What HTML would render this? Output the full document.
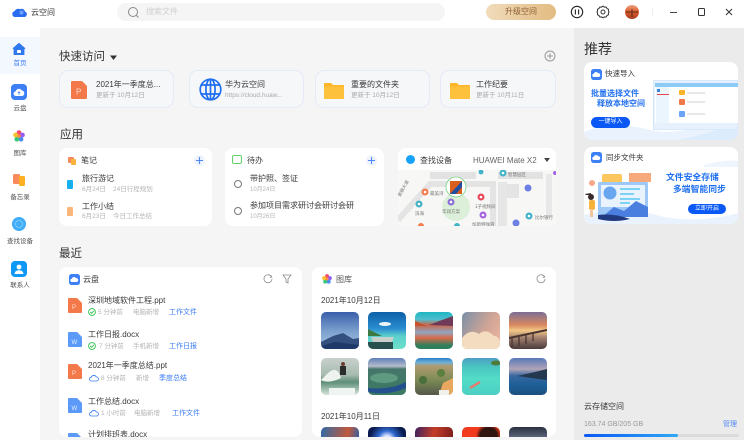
<!DOCTYPE html>
<html lang="zh"><head><meta charset="utf-8"><title>云空间</title>
<style>
*{box-sizing:border-box;margin:0;padding:0}
html,body{width:744px;height:440px;overflow:hidden;background:#f5f5f5}
body{position:relative;font-family:"Liberation Sans","Noto Sans CJK SC",sans-serif;color:#333;filter:blur(.3px)}
.a{position:absolute}
.t{position:absolute;white-space:nowrap;line-height:1;font-size:8px;color:#3a3a3a;transform:translateY(1px)}
.s{font-size:6.5px;color:#b4b4b4}
.h{font-size:11.5px;color:#333;transform:translateY(2px)}
.b{color:#3b7cf5;font-size:7px}
.c{position:absolute;background:#fff;border-radius:8px}
.q{position:absolute;top:70px;height:38px;width:115px;border-radius:9px;background:#f6f7f9;border:1px solid #e4eaf6}
.m{position:absolute;left:0;width:40px;text-align:center;font-size:6.5px;line-height:1;color:#555;transform:translateY(1px)}
svg{position:absolute;display:block}
.p{border-radius:5px;overflow:hidden}
</style></head><body>
<!-- top bar -->
<div class="a" style="left:0;top:0;width:744px;height:28px;background:#fff"></div>
<svg style="left:12px;top:6px" width="15" height="12" viewBox="0 0 15 12"><path d="M3 11a3 3 0 0 1-.4-5.9A4 4 0 0 1 8 3.2 3.4 3.4 0 0 1 13 5.6 2.8 2.8 0 0 1 12.4 11z" fill="#2a6cf0"/><circle cx="9.5" cy="6.5" r="2" fill="#6ea2f8"/></svg>
<span class="t" style="left:31px;top:8px">云空间</span>
<div class="a" style="left:117px;top:3px;width:328px;height:18px;background:#f5f5f5;border-radius:9px"></div>
<svg style="left:127px;top:6px" width="13" height="13" viewBox="0 0 13 13" fill="none" stroke="#8a8a8a"><circle cx="6" cy="6" r="4.5"/><path d="M9.4 9.4l2 2"/></svg>
<span class="t" style="left:146px;top:7px;color:#cfcfcf">搜索文件</span>
<div class="a" style="left:486px;top:4px;width:70px;height:16px;border-radius:8px;background:linear-gradient(90deg,#f0dcbc,#e2bb80);text-align:center;font-size:8px;line-height:16px;color:#8d5d35">升级空间</div>
<svg style="left:570px;top:5px" width="14" height="14" viewBox="0 0 14 14" fill="none" stroke="#222"><circle cx="7" cy="7" r="5.7" stroke-width="1.1"/><path d="M5.4 4.5v5M8.6 4.5v5" stroke-width="1.1"/></svg>
<svg style="left:596px;top:5px" width="14" height="14" viewBox="0 0 14 14" fill="none" stroke="#333" stroke-width="1"><path d="M7 1.2l1.4.9 1.7-.1.9 1.5 1.5.8-.1 1.7.7 1-.7 1 .1 1.7-1.5.8-.9 1.5-1.7-.1-1.4.9-1.4-.9-1.7.1-.9-1.5-1.5-.8.1-1.7-.7-1 .7-1-.1-1.7 1.5-.8.9-1.5 1.7.1z"/><circle cx="7" cy="7" r="2"/></svg>
<svg style="left:625px;top:5px" width="14" height="14" viewBox="0 0 14 14"><defs><linearGradient id="av" x1="0" y1="0" x2="0" y2="1"><stop offset="0" stop-color="#f0a080"/><stop offset=".5" stop-color="#d85a28"/><stop offset="1" stop-color="#a83a20"/></linearGradient></defs><circle cx="7" cy="7" r="7" fill="url(#av)"/><path d="M1 7h12M7 4v8" stroke="#5a2a18" stroke-width="1"/></svg>
<div class="a" style="left:652px;top:8px;width:1px;height:8px;background:#eee"></div>
<div class="a" style="left:670px;top:12px;width:7px;height:1px;background:#444"></div>
<div class="a" style="left:698px;top:8px;width:7px;height:8px;border:1.2px solid #333;border-radius:1.5px"></div>
<svg style="left:725px;top:8px" width="8" height="8" viewBox="0 0 8 8" stroke="#333" stroke-width="1"><path d="M1 1l6 6M7 1L1 7"/></svg>

<!-- sidebar -->
<div class="a" style="left:0;top:28px;width:40px;height:412px;background:#fff"></div>
<div class="a" style="left:0;top:37px;width:40px;height:37px;background:#f3f7fe"></div>
<svg style="left:12px;top:42px" width="14" height="14" viewBox="0 0 14 14"><path d="M7 .8L13.5 6.4 12.4 7.2V13H1.6V7.2L.5 6.4z" fill="#2f78ee"/><rect x="5" y="8" width="4" height="3" rx=".8" fill="#fff"/></svg>
<div class="m" style="top:60px;color:#3b7cf5">首页</div>
<div class="a" style="left:11px;top:84px;width:16px;height:16px;border-radius:4px;background:#3d80f6"></div>
<svg style="left:13px;top:87px" width="12" height="10" viewBox="0 0 12 10"><path d="M3 9a2.3 2.3 0 0 1-.3-4.6A3.2 3.2 0 0 1 8.6 3.4 2.9 2.9 0 0 1 9.4 9z" fill="#fff"/><path d="M6 5v3M4.8 6L6 4.8 7.2 6" stroke="#3d80f6" stroke-width=".7" fill="none"/></svg>
<div class="m" style="top:105px">云盘</div>
<svg style="left:13px;top:130px" width="12" height="12" viewBox="0 0 12 12"><circle cx="6" cy="2.6" r="2.4" fill="#f54e6e"/><circle cx="9.4" cy="5" r="2.4" fill="#9a5cf0"/><circle cx="8" cy="9.2" r="2.4" fill="#4d8af5"/><circle cx="3.8" cy="9.2" r="2.4" fill="#37c97a"/><circle cx="2.6" cy="5" r="2.4" fill="#f6c22f"/><circle cx="6" cy="6" r="1.8" fill="#ff8d3a"/></svg>
<div class="m" style="top:150px">图库</div>
<div class="a" style="left:13px;top:174px;width:7px;height:10px;background:#f98a5e;border-radius:1.5px"></div>
<div class="a" style="left:19px;top:176px;width:6px;height:10px;background:#fdb021;border-radius:1.5px"></div>
<div class="m" style="top:194px">备忘录</div>
<div class="a" style="left:12px;top:217px;width:14px;height:14px;border-radius:50%;background:#3fadf8"></div>
<div class="a" style="left:15px;top:220px;width:8px;height:8px;border-radius:50%;border:1px solid #7ccafb"></div>
<div class="m" style="top:238px">查找设备</div>
<div class="a" style="left:11px;top:261px;width:16px;height:16px;border-radius:4px;background:#0f99f5"></div>
<svg style="left:13px;top:263px" width="12" height="12" viewBox="0 0 12 12" fill="#fff"><circle cx="6" cy="4" r="2.4"/><path d="M1.6 11c0-2.6 2-3.8 4.4-3.8s4.4 1.2 4.4 3.8z"/></svg>
<div class="m" style="top:282px">联系人</div>

<!-- right panel -->
<div class="a" style="left:574px;top:28px;width:170px;height:412px;background:#ebebeb"></div>

<!-- quick access -->
<span class="t h" style="left:59px;top:50px">快速访问</span>
<svg style="left:110px;top:55px" width="7" height="6"><path d="M0 .5h7L3.5 5z" fill="#333"/></svg>
<svg style="left:544px;top:50px" width="12" height="12" viewBox="0 0 12 12" fill="none" stroke="#999"><circle cx="6" cy="6" r="5"/><path d="M6 3.2v5.6M3.2 6h5.6"/></svg>

<div class="q" style="left:59px"></div>
<div class="q" style="left:189px"></div>
<div class="q" style="left:315px"></div>
<div class="q" style="left:440px;width:116px"></div>
<svg style="left:71px;top:81px" width="16" height="18" viewBox="0 0 16 18"><path d="M1 0h10l5 5v12a1 1 0 0 1-1 1H1a1 1 0 0 1-1-1V1a1 1 0 0 1 1-1z" fill="#f4794a"/><text x="5" y="13.5" font-size="8" fill="#fde0d2" font-family="Liberation Sans">P</text></svg>
<span class="t" style="left:96px;top:80px">2021年一季度总...</span>
<span class="t s" style="left:96px;top:92px;color:#aaa">更新于 10月12日</span>
<svg style="left:199px;top:78px" width="23" height="23" viewBox="0 0 23 23" fill="none" stroke="#1f6ff0" stroke-width="1.7"><circle cx="11.5" cy="11.5" r="10.3"/><ellipse cx="11.5" cy="11.5" rx="4.6" ry="10.3"/><path d="M11.5 1v21M2.4 7h18.2M2.4 16h18.2"/></svg>
<span class="t" style="left:225px;top:80px">华为云空间</span>
<span class="t s" style="left:225px;top:92px;color:#aaa">https://cloud.huaw...</span>
<svg style="left:324px;top:83px" width="20" height="16" viewBox="0 0 20 16"><path d="M1 0h6l2 2h10a1 1 0 0 1 1 1v12a1 1 0 0 1-1 1H1a1 1 0 0 1-1-1V1a1 1 0 0 1 1-1z" fill="#fdb52a"/><rect y="3.5" width="20" height="12.5" rx="1" fill="#fec13c"/></svg>
<span class="t" style="left:351px;top:80px">重要的文件夹</span>
<span class="t s" style="left:351px;top:92px;color:#aaa">更新于 10月12日</span>
<svg style="left:450px;top:83px" width="20" height="16" viewBox="0 0 20 16"><path d="M1 0h6l2 2h10a1 1 0 0 1 1 1v12a1 1 0 0 1-1 1H1a1 1 0 0 1-1-1V1a1 1 0 0 1 1-1z" fill="#fdb52a"/><rect y="3.5" width="20" height="12.5" rx="1" fill="#fec13c"/></svg>
<span class="t" style="left:476px;top:80px">工作纪要</span>
<span class="t s" style="left:476px;top:92px;color:#aaa">更新于 10月11日</span>

<!-- apps -->
<span class="t h" style="left:60px;top:128px">应用</span>
<div class="c" style="left:59px;top:148px;width:153px;height:78px"></div>
<div class="a" style="left:68px;top:157px;width:6px;height:6px;background:#f98a5e;border-radius:1px"></div>
<div class="a" style="left:71px;top:159px;width:5px;height:6px;background:#fcb33c;border-radius:1px"></div>
<span class="t" style="left:81px;top:156px">笔记</span>
<div class="a" style="left:194px;top:155px;width:11px;height:11px;border-radius:50%;background:#eef3fe"></div>
<svg style="left:196px;top:157px" width="7" height="7" stroke="#4f88f2" stroke-width="1.1"><path d="M3.5 0v7M0 3.5h7"/></svg>
<div class="a" style="left:67px;top:180px;width:6px;height:9px;background:#17b0ee;border-radius:1px"></div>
<span class="t" style="left:82px;top:174px">旅行游记</span>
<span class="t s" style="left:82px;top:186px">6月24日</span><span class="t s" style="left:113px;top:186px">24日行程规划</span>
<div class="a" style="left:67px;top:207px;width:6px;height:9px;background:#fbb77a;border-radius:1px"></div>
<span class="t" style="left:82px;top:202px">工作小结</span>
<span class="t s" style="left:82px;top:213px">6月23日</span><span class="t s" style="left:113px;top:213px">今日工作总结</span>

<div class="c" style="left:225px;top:148px;width:159px;height:78px"></div>
<div class="a" style="left:232px;top:155px;width:10px;height:9px;border:1.6px solid #5fd568;border-radius:2px"></div>
<span class="t" style="left:247px;top:156px">待办</span>
<div class="a" style="left:366px;top:155px;width:11px;height:11px;border-radius:50%;background:#eef3fe"></div>
<svg style="left:368px;top:157px" width="7" height="7" stroke="#4f88f2" stroke-width="1.1"><path d="M3.5 0v7M0 3.5h7"/></svg>
<div class="a" style="left:234px;top:180px;width:8px;height:8px;border:1px solid #777;border-radius:50%"></div>
<span class="t" style="left:250px;top:174px">带护照、签证</span>
<span class="t s" style="left:250px;top:186px;font-size:6px">10月24日</span>
<div class="a" style="left:234px;top:207px;width:8px;height:8px;border:1px solid #777;border-radius:50%"></div>
<span class="t" style="left:250px;top:201px">参加项目需求研讨会研讨会研</span>
<span class="t s" style="left:250px;top:213px;font-size:6px">10月26日</span>

<div class="c" style="left:398px;top:148px;width:158px;height:78px"></div>
<div class="a" style="left:406px;top:155px;width:9px;height:9px;border-radius:50%;background:#16a2f8"></div>
<span class="t" style="left:420px;top:156px">查找设备</span>
<span class="t" style="left:473px;top:156px;color:#666">HUAWEI Mate X2</span>
<svg style="left:544px;top:158px" width="6" height="4"><path d="M0 0h6L3 4z" fill="#444"/></svg>
<svg style="left:398px;top:170px" width="158" height="56" viewBox="0 0 158 56">
<rect width="158" height="56" fill="#f7f7f6"/>
<path d="M0 50L32 14H95V56" fill="none" stroke="#e4e4e4" stroke-width="6"/>
<path d="M32 2H78V9H32zM100 2H145V9H100z" fill="#e2e2e2"/>
<path d="M100 12h9v44h-9z" fill="#e6e6e6"/>
<path d="M109 14h12v14h-12z" fill="#e4e4e4"/><path d="M148 4h6v44h-6z" fill="#e8e8e8"/>
<circle cx="58" cy="37" r="14" fill="#dcefd9"/>
<circle cx="58" cy="17" r="10" fill="#fff" stroke="#77d083" stroke-width=".8"/>
<rect x="52" y="11" width="12" height="13" fill="#d8601f"/><path d="M52 24l12-13v6l-6 7z" fill="#1f4f9e"/>
<g font-family="Noto Sans CJK SC" font-size="4.5" fill="#777"><text x="32" y="25">最美湾</text><text x="44" y="43">华润方案</text><text x="77" y="38">1子视频间</text><text x="74" y="56">加斯特咖液</text><text x="137" y="49">比尔银行</text><text x="110" y="6">智慧园区</text><text x="17" y="45">滨海</text><text transform="translate(2 27) rotate(-60)">金融大道</text></g>
<g><circle cx="27" cy="22" r="3.5" fill="#f47b4c"/><circle cx="27" cy="22" r="1.3" fill="#fff"/><circle cx="21" cy="34" r="3.5" fill="#45b2c4"/><circle cx="21" cy="34" r="1.3" fill="#fff"/><circle cx="53" cy="32" r="3.5" fill="#8c70d6"/><circle cx="53" cy="32" r="1.3" fill="#fff"/><circle cx="83" cy="27" r="3.5" fill="#e94a5b"/><circle cx="83" cy="27" r="1.3" fill="#fff"/><circle cx="85" cy="45" r="3.5" fill="#a764e0"/><circle cx="85" cy="45" r="1.3" fill="#fff"/><circle cx="130" cy="18" r="3.5" fill="#6b80e2"/><circle cx="131" cy="46" r="3.5" fill="#42b3c8"/><circle cx="131" cy="46" r="1.3" fill="#fff"/><circle cx="118" cy="53" r="3.5" fill="#6b80e2"/><circle cx="105" cy="3" r="3.5" fill="#42b3c8"/><circle cx="105" cy="3" r="1.3" fill="#fff"/><circle cx="23" cy="56" r="3" fill="#f47b4c"/><circle cx="83" cy="2" r="2.5" fill="#42b3c8"/><circle cx="59" cy="56" r="3" fill="#42b3c8"/><circle cx="157" cy="3" r="2" fill="#a764e0"/></g>
</svg>

<!-- recent -->
<span class="t h" style="left:59px;top:247px">最近</span>
<div class="c" style="left:59px;top:267px;width:243px;height:170px;overflow:hidden">
<svg style="left:10px;top:7px" width="11" height="11" viewBox="0 0 11 11"><rect width="11" height="11" rx="2.6" fill="#3d80f6"/><path d="M3 8a1.6 1.6 0 0 1-.2-3.2A2.3 2.3 0 0 1 7 4.1 2 2 0 0 1 7.8 8z" fill="#fff"/></svg>
<span class="t" style="left:24px;top:8px">云盘</span>
<svg style="left:204px;top:7px" width="10" height="10" viewBox="0 0 10 10" fill="none" stroke="#888" stroke-width=".8"><path d="M8.6 3A4 4 0 1 0 9 5"/><path d="M7.6 1.3L8.8 3 7 3.6"/></svg>
<svg style="left:223px;top:7px" width="10" height="10" viewBox="0 0 10 10" fill="none" stroke="#888" stroke-width=".8"><path d="M1 1h8L6 5v4L4 8V5z"/></svg>
<svg style="left:9px;top:31px" width="14" height="15" viewBox="0 0 14 15"><path d="M1 0h8l5 5v9a1 1 0 0 1-1 1H1a1 1 0 0 1-1-1V1a1 1 0 0 1 1-1z" fill="#f4794a"/><text x="4" y="11" font-size="6" fill="#fde0d2" font-family="Liberation Sans">P</text></svg>
<span class="t" style="left:29px;top:29px">深圳地域软件工程.ppt</span>
<svg style="left:29px;top:41px" width="8" height="8" fill="none" stroke="#2fc24d"><circle cx="4" cy="4" r="3.4" stroke-width=".9"/><path d="M2.2 4l1.3 1.3L5.9 2.8" stroke-width=".9"/></svg>
<span class="t s" style="left:39px;top:42px">5 分钟前</span><span class="t s" style="left:74px;top:42px">电脑新增</span><span class="t b" style="left:110px;top:41px">工作文件</span>
<svg style="left:9px;top:65px" width="14" height="15" viewBox="0 0 14 15"><path d="M1 0h8l5 5v9a1 1 0 0 1-1 1H1a1 1 0 0 1-1-1V1a1 1 0 0 1 1-1z" fill="#5b9af8"/><text x="3.5" y="12" font-size="6" fill="#e3eefe" font-family="Liberation Sans">W</text></svg>
<span class="t" style="left:29px;top:63px">工作日报.docx</span>
<svg style="left:29px;top:75px" width="8" height="8" fill="none" stroke="#2fc24d"><circle cx="4" cy="4" r="3.4" stroke-width=".9"/><path d="M2.2 4l1.3 1.3L5.9 2.8" stroke-width=".9"/></svg>
<span class="t s" style="left:40px;top:76px">7 分钟前</span><span class="t s" style="left:74px;top:76px">手机新增</span><span class="t b" style="left:110px;top:75px">工作日报</span>
<svg style="left:9px;top:97px" width="14" height="15" viewBox="0 0 14 15"><path d="M1 0h8l5 5v9a1 1 0 0 1-1 1H1a1 1 0 0 1-1-1V1a1 1 0 0 1 1-1z" fill="#f4794a"/><text x="4" y="11" font-size="6" fill="#fde0d2" font-family="Liberation Sans">P</text></svg>
<span class="t" style="left:29px;top:94px">2021年一季度总结.ppt</span>
<svg style="left:30px;top:107px" width="10" height="8" viewBox="0 0 10 8" fill="none" stroke="#3b7cf5" stroke-width=".8"><path d="M2.5 7a1.9 1.9 0 0 1-.2-3.8A2.8 2.8 0 0 1 7.4 3 2 2 0 0 1 7.6 7z"/></svg>
<span class="t s" style="left:42px;top:108px">8 分钟前</span><span class="t s" style="left:77px;top:108px">新增</span><span class="t b" style="left:100px;top:107px">季度总结</span>
<svg style="left:9px;top:131px" width="14" height="15" viewBox="0 0 14 15"><path d="M1 0h8l5 5v9a1 1 0 0 1-1 1H1a1 1 0 0 1-1-1V1a1 1 0 0 1 1-1z" fill="#5b9af8"/><text x="3.5" y="12" font-size="6" fill="#e3eefe" font-family="Liberation Sans">W</text></svg>
<span class="t" style="left:29px;top:130px">工作总结.docx</span>
<svg style="left:30px;top:142px" width="10" height="8" viewBox="0 0 10 8" fill="none" stroke="#3b7cf5" stroke-width=".8"><path d="M2.5 7a1.9 1.9 0 0 1-.2-3.8A2.8 2.8 0 0 1 7.4 3 2 2 0 0 1 7.6 7z"/></svg>
<span class="t s" style="left:42px;top:143px">1 小时前</span><span class="t s" style="left:75px;top:143px">电脑新增</span><span class="t b" style="left:113px;top:142px">工作文件</span>
<svg style="left:9px;top:166px" width="14" height="15" viewBox="0 0 14 15"><path d="M1 0h8l5 5v9a1 1 0 0 1-1 1H1a1 1 0 0 1-1-1V1a1 1 0 0 1 1-1z" fill="#5b9af8"/></svg>
<span class="t" style="left:29px;top:163px">计划排班表.docx</span>
</div>

<div class="c" style="left:312px;top:267px;width:244px;height:170px"></div>
<svg style="left:322px;top:274px" width="10" height="10" viewBox="0 0 12 12"><circle cx="6" cy="2.6" r="2.4" fill="#f54e6e"/><circle cx="9.4" cy="5" r="2.4" fill="#9a5cf0"/><circle cx="8" cy="9.2" r="2.4" fill="#4d8af5"/><circle cx="3.8" cy="9.2" r="2.4" fill="#37c97a"/><circle cx="2.6" cy="5" r="2.4" fill="#f6c22f"/><circle cx="6" cy="6" r="1.8" fill="#ff8d3a"/></svg>
<span class="t" style="left:336px;top:275px;color:#555">图库</span>
<svg style="left:536px;top:274px" width="10" height="10" viewBox="0 0 10 10" fill="none" stroke="#888" stroke-width=".8"><path d="M8.6 3A4 4 0 1 0 9 5"/><path d="M7.6 1.3L8.8 3 7 3.6"/></svg>
<span class="t" style="left:321px;top:296px">2021年10月12日</span>
<span class="t" style="left:321px;top:412px">2021年10月11日</span>

<!-- photos row 1 -->
<div class="a p" style="left:321px;top:312px;width:38px;height:37px;background:linear-gradient(#3a5faa,#7fa4d0 55%,#a8c4dc)"><svg width="38" height="37"><path d="M0 30L12 24 22 21 32 27 38 26V37H0z" fill="#34507f"/><path d="M0 34L14 30 38 33V37H0z" fill="#1f3a68"/></svg></div>
<div class="a p" style="left:368px;top:312px;width:38px;height:37px;background:linear-gradient(#0d5fa8,#2a8ed0 45%,#5cd0cc 65%,#6fe0cc)"><svg width="38" height="37"><ellipse cx="17" cy="12" rx="6" ry="2" fill="#eaf4fb"/><path d="M0 17L14 24H0z" fill="#3d7a42"/><path d="M3 25H26L24 30H5z" fill="#c9d0cc"/><path d="M0 30H25V37H0z" fill="#27504f"/></svg></div>
<div class="a p" style="left:415px;top:312px;width:38px;height:37px;background:linear-gradient(#1fb6c2 0,#4fbfcf 20%,#c9664a 35%,#8fa6c0 55%,#d96a4a 70%,#2f7f5c 90%)"><svg width="38" height="37"><path d="M14 13L27 8 38 4V14z" fill="#6e3a58"/><path d="M0 9L12 14H0z" fill="#c5532b"/></svg></div>
<div class="a p" style="left:462px;top:312px;width:38px;height:37px;background:linear-gradient(120deg,#7a90a8,#cfa496 55%,#f0b8a0)"><svg width="38" height="37"><path d="M0 37V26Q8 16 17 22 24 16 32 24 37 24 38 30V37z" fill="#f3dcc0"/></svg></div>
<div class="a p" style="left:509px;top:312px;width:38px;height:37px;background:linear-gradient(#7b6f94,#d9895f 35%,#f2c886 50%,#a08070 70%,#4a3a3c)"><svg width="38" height="37" stroke="#4a3430" stroke-width="2" fill="none"><path d="M0 26L38 18"/><path d="M3 26v11M10 25v9M17 23v9M24 22v7" stroke-width="1.3"/></svg></div>
<!-- photos row 2 -->
<div class="a p" style="left:321px;top:358px;width:38px;height:37px;background:linear-gradient(#c8d0cc,#a8bcb0 45%,#5f8f78 65%,#d6e4da)"><svg width="38" height="37"><rect x="19" y="8" width="6" height="9" fill="#2c2c2c"/><circle cx="22" cy="6" r="2" fill="#6a4030"/><path d="M6 16Q16 6 20 20 8 26 0 22z" fill="#eef3ef"/><path d="M8 30H34V37H8z" fill="#eef4ef"/></svg></div>
<div class="a p" style="left:368px;top:358px;width:38px;height:37px;background:linear-gradient(#5f7fb8,#b5bdcb 22%,#46766a 30%,#3a7a62)"><svg width="38" height="37"><path d="M0 30Q22 32 38 24V30Q20 38 0 34z" fill="#24508f"/><ellipse cx="16" cy="20" rx="14" ry="5" fill="#5e9a80"/></svg></div>
<div class="a p" style="left:415px;top:358px;width:38px;height:37px;background:linear-gradient(#2a7ec8,#6fb0d8 12%,#b09a6f 22%,#7b8a55 60%,#55584a)"><svg width="38" height="37"><path d="M28 25L38 20V37H24z" fill="#e8a860"/><path d="M24 32H34V37H24z" fill="#f2f0ea"/><circle cx="8" cy="22" r="4" fill="#4b6f3a"/><circle cx="26" cy="15" r="4" fill="#5c7f3f"/></svg></div>
<div class="a p" style="left:462px;top:358px;width:38px;height:37px;background:linear-gradient(#4f9dc4,#49c4c0 22%,#53dcc8 55%,#4ccfc2)"><svg width="38" height="37"><ellipse cx="34" cy="5" rx="5" ry="2.5" fill="#4f7a3a"/><path d="M8 30L18 24" stroke="#e87a70" stroke-width="2.4"/></svg></div>
<div class="a p" style="left:509px;top:358px;width:38px;height:37px;background:linear-gradient(#5878b8,#b0a4b8 30%,#3a68a0 48%,#1d5f96 72%,#1b4f80)"><svg width="38" height="37"><path d="M8 18L26 14 38 11V22L22 20z" fill="#24384f"/></svg></div>
<!-- photos row 3 -->
<div class="a" style="left:321px;top:427px;width:38px;height:10px;border-radius:5px 5px 0 0;background:linear-gradient(100deg,#2e6aa8,#c0593c 70%,#3a60a0)"></div>
<div class="a" style="left:368px;top:427px;width:38px;height:10px;border-radius:5px 5px 0 0;background:radial-gradient(circle at 50% 130%,#dfe8ff 18%,#2f6ad0 40%,#0a1c50 75%)"></div>
<div class="a" style="left:415px;top:427px;width:38px;height:10px;border-radius:5px 5px 0 0;background:linear-gradient(100deg,#3c2260,#c43c28 50%,#7c1f1c)"></div>
<div class="a" style="left:462px;top:427px;width:38px;height:10px;border-radius:5px 5px 0 0;background:radial-gradient(circle at 70% 90%,#301410 30%,#f23a1e 45%)"></div>
<div class="a" style="left:509px;top:427px;width:38px;height:10px;border-radius:5px 5px 0 0;background:linear-gradient(#2a3040,#5a6478)"></div>

<!-- recommend -->
<span class="t" style="left:584px;top:41px;font-size:14px;color:#333">推荐</span>
<div class="c" style="left:584px;top:62px;width:154px;height:78px;overflow:hidden">
<svg style="left:0;top:0" width="154" height="78"><path d="M0 70Q30 58 66 68 100 76 154 50V78H0z" fill="#eaf3fd"/><path d="M92 78Q130 72 154 58V78z" fill="#dcecfc"/></svg>
<div class="a" style="left:69px;top:18px;width:85px;height:50px;background:#e6f1fd;border:1px solid #d6e8fb"></div>
<div class="a" style="left:71px;top:21px;width:83px;height:40px;background:#fff"></div>
<div class="a" style="left:71px;top:21px;width:83px;height:4px;background:#8ccbf5"></div>
<div class="a" style="left:72px;top:25px;width:13px;height:36px;background:#eaf5fe"></div>
<div class="a" style="left:73px;top:32px;width:12px;height:1px;background:#e9444e"></div>
<div class="a" style="left:73px;top:27px;width:3px;height:3px;background:#3a80e0"></div>
<div class="a" style="left:95px;top:28px;width:6px;height:5px;background:#fcb52b;border-radius:1px"></div><div class="a" style="left:103px;top:30px;width:18px;height:2px;background:#e8e8e8"></div>
<div class="a" style="left:95px;top:37px;width:6px;height:6px;background:#f4794a;border-radius:1px"></div><div class="a" style="left:103px;top:39px;width:18px;height:2px;background:#e8e8e8"></div>
<div class="a" style="left:95px;top:49px;width:6px;height:6px;background:#6ba4f8;border-radius:1px"></div><div class="a" style="left:103px;top:51px;width:18px;height:2px;background:#e8e8e8"></div>
<svg style="left:7px;top:7px" width="11" height="11" viewBox="0 0 11 11"><rect width="11" height="11" rx="2.6" fill="#3d80f6"/><path d="M3 8a1.6 1.6 0 0 1-.2-3.2A2.3 2.3 0 0 1 7 4.1 2 2 0 0 1 7.8 8z" fill="#fff"/></svg>
<span class="t" style="left:21px;top:7px;font-size:7.5px">快速导入</span>
<span class="t" style="left:7px;top:27px;color:#1f6ff0;font-weight:bold">批量选择文件</span>
<span class="t" style="left:13px;top:37px;color:#1f6ff0;font-weight:bold">释放本地空间</span>
<div class="a" style="left:7px;top:55px;width:39px;height:11px;border-radius:6px;background:#0a59f7;color:#fff;font-size:6px;line-height:11px;text-align:center">一键导入</div>
</div>
<div class="c" style="left:584px;top:147px;width:154px;height:77px;overflow:hidden">
<svg style="left:0;top:0" width="154" height="77"><path d="M0 68Q40 58 80 70 120 76 154 66V77H0z" fill="#eaf3fd"/><path d="M120 18Q140 12 154 14V20H120z" fill="#eef5fd"/>
<rect x="18" y="27" width="20" height="14" rx="2" fill="#fbc65e"/>
<rect x="45" y="26" width="22" height="30" fill="#fff"/><rect x="45" y="26" width="22" height="9" fill="#f7a97e"/><path d="M47 37v14M51 37v14M55 37v14M59 37v14M63 37v14" stroke="#bfe0f6" stroke-width="1"/>
<rect x="14" y="35" width="50" height="35" rx="1.5" fill="#9dc8f8"/><rect x="17" y="38" width="44" height="22" fill="#e9f3fe"/>
<circle cx="26" cy="46" r="6.5" fill="#6aa5f0"/>
<path d="M36 42h20M36 47h14M36 52h20M36 56h10" stroke="#3fbff0" stroke-width="1.2"/>
<path d="M18 70L30 60 40 64 52 54 64 60V70z" fill="#4a7fe0"/>
<path d="M14 68Q30 66 46 72 30 76 14 72z" fill="#223a80"/>
<circle cx="7" cy="50" r="3" fill="#3a2a2a"/><path d="M1 47l6-1v2H2z" fill="#3a2a2a"/><rect x="5" y="53" width="6" height="10" rx="2" fill="#f7b23a"/><rect x="6" y="62" width="3" height="8" fill="#f3c59a"/>
<circle cx="8" cy="36" r="3" fill="#f9a88a"/></svg>
<svg style="left:7px;top:5px" width="11" height="11" viewBox="0 0 11 11"><rect width="11" height="11" rx="2.6" fill="#3d80f6"/><path d="M3 8a1.6 1.6 0 0 1-.2-3.2A2.3 2.3 0 0 1 7 4.1 2 2 0 0 1 7.8 8z" fill="#fff"/></svg>
<span class="t" style="left:22px;top:6px;font-size:7.5px">同步文件夹</span>
<span class="t" style="left:82px;top:25px;font-size:8.8px;color:#1f6ff0;font-weight:bold">文件安全存储</span>
<span class="t" style="left:89px;top:37px;font-size:8.8px;color:#1f6ff0;font-weight:bold">多端智能同步</span>
<div class="a" style="left:104px;top:57px;width:38px;height:10px;border-radius:6px;background:#0a59f7;color:#fff;font-size:6px;line-height:10px;text-align:center">立即开启</div>
</div>

<!-- storage -->
<span class="t" style="left:584px;top:402px">云存储空间</span>
<span class="t" style="left:584px;top:420px;font-size:7px;color:#999">163.74 GB/205 GB</span>
<span class="t" style="left:723px;top:420px;font-size:7px;color:#4f88f2">管理</span>
<div class="a" style="left:584px;top:434px;width:155px;height:2.5px;border-radius:2px;background:#dcdcdc"></div>
<div class="a" style="left:584px;top:433.5px;width:94px;height:3px;border-radius:2px;background:linear-gradient(90deg,#0a59f7,#2fa8f5)"></div>
</body></html>
